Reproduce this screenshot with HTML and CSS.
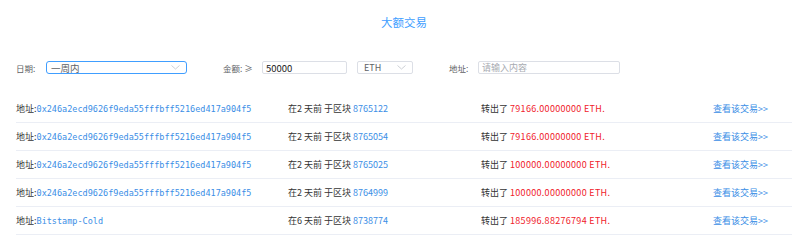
FILE: index.html
```html
<!DOCTYPE html>
<html lang="zh-CN">

<head>
    <meta charset="UTF-8">
    <meta name="viewport" content="width=device-width, initial-scale=1.0">
    <title>大额交易</title>
    <link rel="stylesheet" href="styles.css">
</head>

<body>
    <div class="container">
        <h1 class="title">大额交易</h1>

        <div class="filters">
            <label class="field-label date-label">日期:</label>
            <div class="select select-date">
                <span>一周内</span>
                <svg class="chevron" width="9" height="5" viewBox="0 0 9 5"><path d="M0.5 0.5 L4.5 4 L8.5 0.5" fill="none" stroke="#c0c4cc" stroke-width="0.8"/></svg>
            </div>

            <label class="field-label amount-label">金额: ≥</label>
            <input class="input input-amount" type="text" value="50000">
            <div class="select select-coin">
                <span>ETH</span>
                <svg class="chevron" width="9" height="5" viewBox="0 0 9 5"><path d="M0.5 0.5 L4.5 4 L8.5 0.5" fill="none" stroke="#c0c4cc" stroke-width="0.8"/></svg>
            </div>

            <label class="field-label addr-label">地址:</label>
            <input class="input input-addr" type="text" placeholder="请输入内容">
        </div>

        <div class="list">
            <div class="row">
                <div class="col-addr">地址:<a class="hash">0x246a2ecd9626f9eda55fffbff5216ed417a904f5</a></div>
                <div class="col-block">在2 天前 于区块 <a>8765122</a></div>
                <div class="col-amount">转出了 <span class="red">79166.00000000 ETH.</span></div>
                <div class="col-link"><a>查看该交易&gt;&gt;</a></div>
            </div>
            <div class="row">
                <div class="col-addr">地址:<a class="hash">0x246a2ecd9626f9eda55fffbff5216ed417a904f5</a></div>
                <div class="col-block">在2 天前 于区块 <a>8765054</a></div>
                <div class="col-amount">转出了 <span class="red">79166.00000000 ETH.</span></div>
                <div class="col-link"><a>查看该交易&gt;&gt;</a></div>
            </div>
            <div class="row">
                <div class="col-addr">地址:<a class="hash">0x246a2ecd9626f9eda55fffbff5216ed417a904f5</a></div>
                <div class="col-block">在2 天前 于区块 <a>8765025</a></div>
                <div class="col-amount">转出了 <span class="red">100000.00000000 ETH.</span></div>
                <div class="col-link"><a>查看该交易&gt;&gt;</a></div>
            </div>
            <div class="row">
                <div class="col-addr">地址:<a class="hash">0x246a2ecd9626f9eda55fffbff5216ed417a904f5</a></div>
                <div class="col-block">在2 天前 于区块 <a>8764999</a></div>
                <div class="col-amount">转出了 <span class="red">100000.00000000 ETH.</span></div>
                <div class="col-link"><a>查看该交易&gt;&gt;</a></div>
            </div>
            <div class="row">
                <div class="col-addr">地址:<a class="hash">Bitstamp-Cold</a></div>
                <div class="col-block">在6 天前 于区块 <a>8738774</a></div>
                <div class="col-amount">转出了 <span class="red">185996.88276794 ETH.</span></div>
                <div class="col-link"><a>查看该交易&gt;&gt;</a></div>
            </div>
        </div>
    </div>
</body>

</html>
```

FILE: styles.css
```css
body {
    margin: 0;
    font-family: "Noto Sans CJK SC", "Noto Sans", sans-serif;
    font-size: 9px;
    color: #333;
    background: #fff;
}

.container {
    padding: 0 8px 0 16px;
}

.title {
    margin: 0;
    height: 44px;
    line-height: 44px;
    text-align: center;
    font-size: 11.5px;
    font-weight: normal;
    color: #409eff;
}

.filters {
    display: flex;
    align-items: center;
    height: 13px;
    margin-top: 17px;
}

.field-label {
    color: #606266;
    font-size: 8.5px;
}

.date-label {
    width: 30px;
}

.amount-label {
    margin-left: 36px;
    width: 39px;
}

.addr-label {
    margin-left: 36px;
    width: 29px;
}

.select,
.input {
    box-sizing: border-box;
    height: 13px;
    border: 1px solid #dcdfe6;
    border-radius: 2px;
    font-family: inherit;
    font-size: 9.5px;
    color: #606266;
    background: #fff;
}

.select {
    display: flex;
    align-items: center;
    justify-content: space-between;
    padding: 0 6px 0 4px;
}

.select-date {
    width: 141px;
    border-color: #409eff;
    border-radius: 3px;
}

.select-coin {
    width: 56px;
    margin-left: 10px;
    padding-left: 6px;
    font-size: 9px;
}

.input {
    padding: 0 3px;
    outline: none;
}

.input-amount {
    width: 85px;
    color: #222;
}

.input-addr {
    width: 142px;
    font-size: 9px;
}

.input::placeholder {
    color: #a8abb2;
}

.list {
    margin-top: 21px;
}

.row {
    display: grid;
    grid-template-columns: 272px 193px 232px 1fr;
    align-items: center;
    height: 27px;
    border-bottom: 1px solid #ebeef5;
}

a {
    color: #3a8ee6;
    text-decoration: none;
}

.hash {
    font-family: "DejaVu Sans Mono", monospace;
    font-size: 8.5px;
}

.red {
    color: #f0212a;
    letter-spacing: 0.3px;
}
```
